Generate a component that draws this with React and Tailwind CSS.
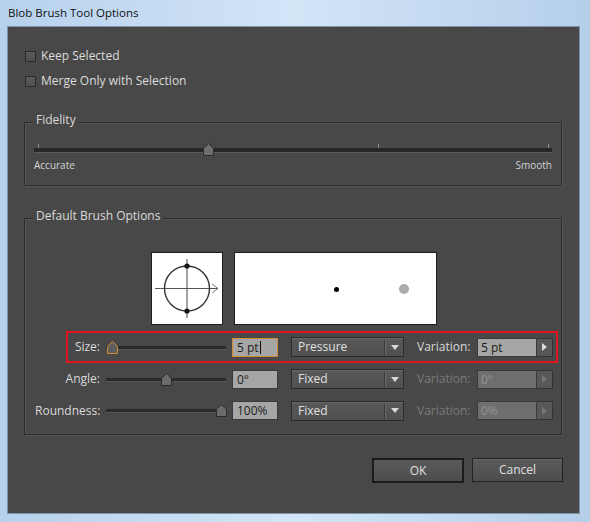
import React from "react";

const FONT = { fontFamily: '"Open Sans", "Noto Sans", sans-serif' };

function Thumb({ orange = false, fill = "#6b6b6b" }) {
  return (
    <svg width="11" height="13" viewBox="0 0 11 13" className="block">
      <path
        d="M0.5 12.5 V5.5 L5.5 0.5 L10.5 5.5 V12.5 Z"
        fill={orange ? "#5e5e5e" : fill}
        stroke={orange ? "#d28a35" : "#2a2a2a"}
        strokeWidth="1"
      />
    </svg>
  );
}

function Checkbox({ label }) {
  return (
    <div className="flex items-center h-[14px] ml-[1px]">
      <div className="w-[11px] h-[11px] border border-[#2a2a2a] bg-gradient-to-b from-[#5c5c5c] to-[#4e4e4e]" />
      <span className="ml-[5px] text-[12px] leading-[14px] text-[#dcdcdc]">{label}</span>
    </div>
  );
}

function Group({ label, h, children }) {
  return (
    <div
      className="relative w-[538px] border border-[#2e2e2e] shadow-[1px_1px_0_#555,inset_1px_1px_0_#555]"
      style={{ height: h }}
    >
      <span className="absolute left-[8px] top-[-11px] px-[3px] bg-[#484848] text-[12px] leading-[16px] text-[#dadada]">
        {label}
      </span>
      {children}
    </div>
  );
}

function Dropdown({ value }) {
  return (
    <div className="ml-[13px] w-[113px] h-[20px] flex items-center border border-[#2b2b2b] bg-gradient-to-b from-[#595959] to-[#4f4f4f] shadow-[inset_0_1px_0_#666]">
      <span className="flex-1 pl-[6px] text-[12px] leading-[18px] text-[#e0e0e0]">{value}</span>
      <div className="h-[16px] w-[1px] bg-[#3a3a3a]" />
      <div className="h-[16px] w-[1px] bg-[#6a6a6a] mr-[5px]" />
      <svg width="8" height="5" viewBox="0 0 8 5" className="mr-[4px]">
        <path d="M0 0 H8 L4 5 Z" fill="#d8d8d8" />
      </svg>
    </div>
  );
}

function Row({ label, thumbLeft, orange, value, mode, varValue, enabled, h, children }) {
  return (
    <div className="relative flex items-center" style={{ height: h }}>
      {children}
      <div className="pl-[10px] w-[75px] text-right text-[12px] leading-[16px] text-[#d8d8d8] whitespace-nowrap">
        {label}
      </div>
      <div className="relative ml-[6px] w-[120px] h-[13px]">
        <div className="absolute left-0 right-0 top-[5px] h-[3px] bg-[#2b2b2b] shadow-[0_1px_0_#555]" />
        <div className="absolute top-0" style={{ left: thumbLeft }}>
          <Thumb orange={orange} />
        </div>
      </div>
      <div
        className={
          "ml-[6px] w-[46px] h-[19px] flex items-center pl-[4px] text-[12px] leading-[17px] text-[#1c1c1c] bg-[#a6a6a6] border " +
          (orange ? "border-[#d28a35]" : "border-[#3a3a3a]")
        }
      >
        {value}
        {orange && <span className="ml-[1px] w-[1px] h-[13px] bg-[#111]" />}
      </div>
      <Dropdown value={mode} />
      <span
        className={
          "ml-[13px] w-[53px] text-[12px] leading-[16px] whitespace-nowrap " +
          (enabled ? "text-[#d8d8d8]" : "text-[#7b7b7b]")
        }
      >
        Variation:
      </span>
      <div className="ml-[7px] flex h-[19px]">
        <div
          className={
            "w-[60px] h-[19px] flex items-center pl-[3px] text-[12px] leading-[17px] border border-[#3a3a3a] " +
            (enabled ? "bg-[#a6a6a6] text-[#1c1c1c]" : "bg-[#6e6e6e] text-[#939393]")
          }
        >
          {varValue}
        </div>
        <div className="w-[16px] h-[19px] flex items-center justify-center border border-l-0 border-[#333] bg-[#585858]">
          <svg width="5" height="8" viewBox="0 0 5 8">
            <path d="M0 0 L5 4 L0 8 Z" fill={enabled ? "#dcdcdc" : "#777"} />
          </svg>
        </div>
      </div>
    </div>
  );
}

export default function App() {
  return (
    <div
      className="w-[590px] h-[522px] flex flex-col bg-gradient-to-r from-[#b7d1ec] via-[#d3e5f7] to-[#b5cfea] overflow-hidden"
      style={FONT}
    >
      <div className="h-[26px] flex items-center pl-[8px] text-[11.5px] text-[#111]">
        Blob Brush Tool Options
      </div>
      <div className="flex-1 pl-[7px] pr-[10px] pb-[8px]">
        <div className="h-full border border-[#7f93a8] bg-[#484848] pl-[16px] pt-[22px] flex flex-col">
          <Checkbox label="Keep Selected" />
          <div className="mt-[11px]">
            <Checkbox label="Merge Only with Selection" />
          </div>

          <div className="mt-[34px]">
            <Group label="Fidelity" h={64}>
              <div className="relative ml-[9px] mt-[20px] w-[518px] h-[14px]">
                {[4, 174, 344, 514].map((x) => (
                  <div key={x} className="absolute top-[1px] w-[1px] h-[5px] bg-[#8a8a8a]" style={{ left: x }} />
                ))}
                <div className="absolute left-0 right-0 top-[5px] h-[4px] bg-[#262626] shadow-[0_1px_0_#5a5a5a]" />
                <div className="absolute top-0 left-[169px]">
                  <Thumb fill="#6e6e6e" />
                </div>
              </div>
              <div className="ml-[9px] mt-[2px] w-[518px] flex justify-between text-[10px] leading-[12px] text-[#d2d2d2]">
                <span>Accurate</span>
                <span>Smooth</span>
              </div>
            </Group>
          </div>

          <div className="mt-[32px]">
            <Group label="Default Brush Options" h={217}>
              <div className="flex gap-[11px] pl-[126px] mt-[33px]">
                <div className="w-[72px] h-[73px] bg-white border border-[#1e1e1e]">
                  <svg width="70" height="71" viewBox="0 0 70 71">
                    <line x1="35" y1="6" x2="35" y2="65" stroke="#444" strokeWidth="1" />
                    <line x1="3" y1="35.5" x2="66" y2="35.5" stroke="#555" strokeWidth="1" />
                    <path d="M60 31 L66 35.5 L60 40" fill="none" stroke="#777" strokeWidth="1" />
                    <circle cx="35" cy="35.5" r="22.5" fill="none" stroke="#333" strokeWidth="1.4" />
                    <circle cx="35" cy="13" r="2.6" fill="#111" />
                    <circle cx="35" cy="58" r="2.6" fill="#111" />
                  </svg>
                </div>
                <div className="relative w-[203px] h-[73px] bg-white border border-[#1e1e1e]">
                  <div className="absolute left-[99px] top-[34px] w-[5px] h-[5px] rounded-full bg-black" />
                  <div className="absolute left-[164px] top-[31px] w-[10px] h-[10px] rounded-full bg-[#adadad]" />
                </div>
              </div>
              <div className="mt-[6px]">
                <Row label="Size:" h={32} thumbLeft={1} orange value="5 pt" mode="Pressure" varValue="5 pt" enabled>
                  <div className="absolute left-[41px] top-0 w-[492px] h-[32px] border-2 border-[#e0141e] pointer-events-none" />
                </Row>
                <Row label="Angle:" h={32} thumbLeft={55} value="0°" mode="Fixed" varValue="0°" enabled={false} />
                <Row label="Roundness:" h={31} thumbLeft={110} value="100%" mode="Fixed" varValue="0%" enabled={false} />
              </div>
            </Group>
          </div>

          <div className="mt-[23px] w-[539px] flex justify-end gap-[8px]">
            <button className="w-[92px] h-[25px] border-2 border-[#1c1c1c] bg-gradient-to-b from-[#5a5a5a] to-[#4d4d4d] text-[12px] text-[#e0e0e0]">
              OK
            </button>
            <button className="w-[91px] h-[24px] border border-[#222] bg-gradient-to-b from-[#5a5a5a] to-[#4d4d4d] shadow-[inset_0_1px_0_#666] text-[12px] text-[#e0e0e0]">
              Cancel
            </button>
          </div>
        </div>
      </div>
    </div>
  );
}
